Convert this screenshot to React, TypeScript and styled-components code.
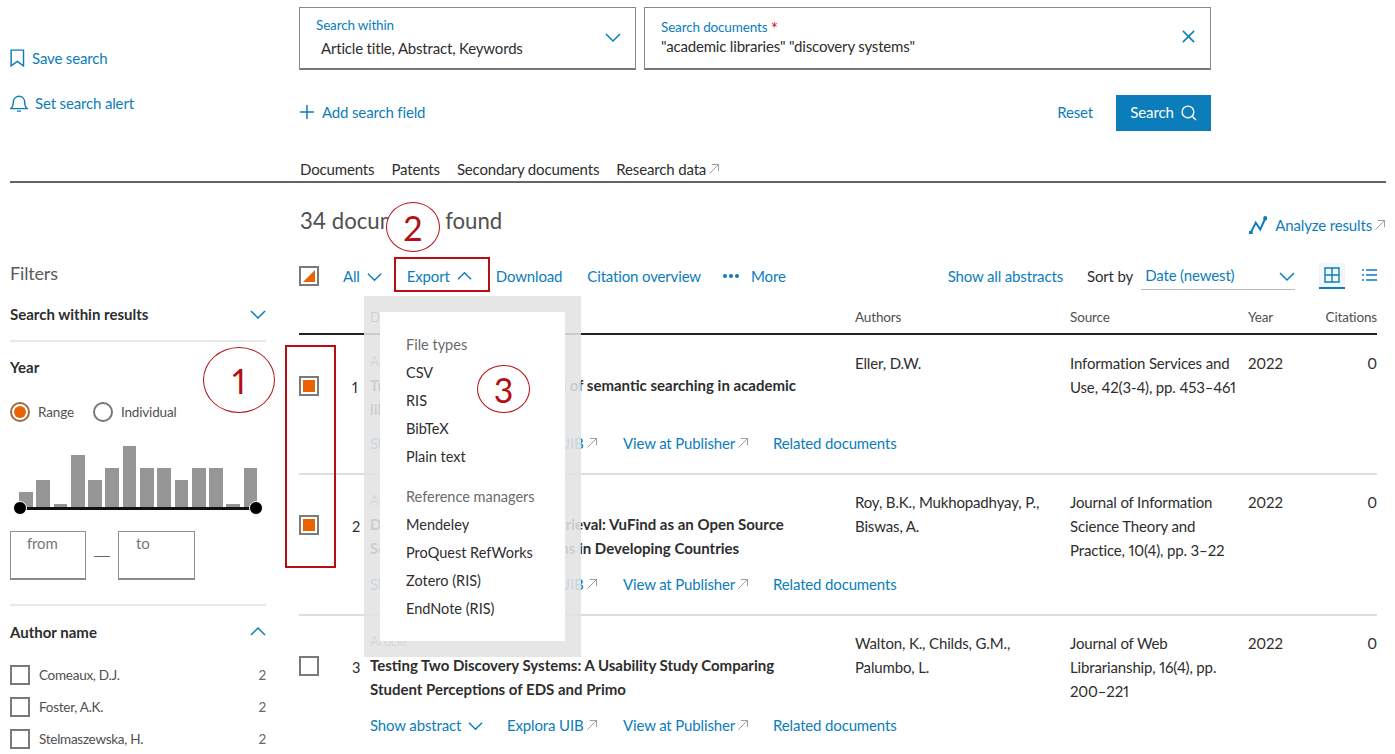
import React from "react";
import styled, { createGlobalStyle } from "styled-components";

const Global = createGlobalStyle`
  html, body { margin: 0; padding: 0; background: #fff; }
  body { font-family: Lato, "Open Sans", "Liberation Sans", sans-serif; font-size: 15px; color: #2e2e2e; letter-spacing: -0.15px; font-variant-numeric: proportional-nums; }
  * { box-sizing: border-box; }
`;

const BLUE = "#0c7dbb";
const RED = "#b50f14";
const ORANGE = "#e96400";

const Page = styled.div`
  position: relative;
  width: 1395px;
  height: 754px;
  overflow: hidden;
`;
const TopBar = styled.header`
  margin: 0 9px 0 10px;
  height: 183px;
  border-bottom: 2px solid #666;
  display: grid;
  grid-template-columns: 289px 912px;
`;
const SaveColumn = styled.div`
  display: flex;
  flex-direction: column;
  gap: 25px;
  padding-top: 48px;
`;
const BlueLink = styled.a<{ $gap?: number }>`
  display: inline-flex;
  align-items: center;
  gap: ${(p) => p.$gap ?? 7}px;
  color: ${BLUE};
  line-height: 20px;
  white-space: nowrap;
`;
const SearchColumn = styled.div`
  padding-top: 7px;
`;
const Fields = styled.div`
  display: flex;
  gap: 8px;
  height: 63px;
`;
const Field = styled.div<{ $w: number; $pt: number }>`
  position: relative;
  width: ${(p) => p.$w}px;
  border: 1px solid #8a8a8a;
  border-bottom: 2px solid #777;
  padding: ${(p) => p.$pt}px 16px 0;
`;
const FieldLabel = styled.div`
  color: ${BLUE};
  font-size: 13.5px;
  line-height: 18px;
  white-space: nowrap;
`;
const Req = styled.span`
  color: #c8102e;
  font-size: 17px;
  line-height: 10px;
  vertical-align: -3px;
`;
const FieldValue = styled.div<{ $indent?: number; $mt: number }>`
  line-height: 20px;
  letter-spacing: -0.18px;
  margin: ${(p) => p.$mt}px 0 0 ${(p) => p.$indent ?? 0}px;
  white-space: nowrap;
`;
const FieldIcon = styled.span`
  position: absolute;
  right: 14px;
  top: 21px;
  display: flex;
  color: ${BLUE};
`;
const Actions = styled.div`
  margin-top: 25px;
  height: 36px;
  display: flex;
  align-items: center;
`;
const AddLink = styled(BlueLink)`
  margin-top: -2px;
`;
const Reset = styled.a`
  margin: -2px 23px 0 auto;
  color: ${BLUE};
`;
const SearchButton = styled.button`
  width: 95px;
  height: 36px;
  border: 0;
  padding: 0 0 2px;
  background: ${BLUE};
  color: #fff;
  font: inherit;
  letter-spacing: inherit;
  display: flex;
  align-items: center;
  justify-content: center;
  gap: 6px;
`;
const Tabs = styled.nav`
  margin-top: 28px;
  padding-left: 1px;
  display: flex;
  gap: 17px;
  line-height: 20px;
`;
const Tab = styled.span`
  display: inline-flex;
  align-items: center;
  gap: 2px;
  white-space: nowrap;
`;
const Body = styled.div`
  margin-left: 10px;
  display: grid;
  grid-template-columns: 256px 1087px;
  column-gap: 33px;
`;
const Sidebar = styled.aside`
  padding-top: 78px;
`;
const FiltersTitle = styled.h2`
  margin: 0;
  font-size: 18px;
  font-weight: 400;
  line-height: 24px;
  color: #5a5a5a;
`;
const FilterHead = styled.div`
  display: flex;
  justify-content: space-between;
  align-items: center;
  font-weight: 700;
  font-size: 15px;
  letter-spacing: 0;
  line-height: 20px;
  color: #2e2e2e;
`;
const HeadIcon = styled.span`
  display: flex;
  color: ${BLUE};
`;
const Section = styled.section<{ $pt: number; $h: number; $line?: boolean }>`
  padding-top: ${(p) => p.$pt}px;
  height: ${(p) => p.$h}px;
  border-bottom: ${(p) => (p.$line ? "2px solid #e8e8e8" : "0")};
`;
const Radios = styled.div`
  margin-top: 25px;
  display: flex;
  align-items: center;
  gap: 8px;
  font-size: 13.5px;
  color: #505050;
  line-height: 20px;
`;
const Radio = styled.span<{ $on?: boolean; $ml?: number }>`
  width: 20px;
  height: 20px;
  margin-left: ${(p) => p.$ml ?? 0}px;
  border-radius: 50%;
  border: 2px solid ${(p) => (p.$on ? "#a06a45" : "#777")};
  display: flex;
  align-items: center;
  justify-content: center;
  &::after {
    content: "";
    width: 12px;
    height: 12px;
    border-radius: 50%;
    background: ${(p) => (p.$on ? ORANGE : "transparent")};
  }
`;
const Histogram = styled.div`
  position: relative;
  margin-top: 13px;
  height: 75px;
  padding-left: 9px;
  display: flex;
  align-items: flex-end;
  gap: 3.6px;
  width: 256px;
`;
const Bar = styled.div<{ $h: number }>`
  width: 13.7px;
  height: ${(p) => p.$h}px;
  background: #969696;
  margin-bottom: 3px;
`;
const Track = styled.div`
  position: absolute;
  left: 10px;
  right: 10px;
  bottom: 0;
  height: 3px;
  background: #111;
`;
const Handle = styled.span<{ $side: "left" | "right" }>`
  position: absolute;
  ${(p) => p.$side}: 3px;
  bottom: -5px;
  width: 14px;
  height: 14px;
  border-radius: 50%;
  background: #000;
  border: 1.5px solid #fff;
`;
const RangeInputs = styled.div`
  margin-top: 21px;
  display: flex;
  align-items: center;
`;
const RangeBox = styled.div<{ $w: number; $pl: number }>`
  width: ${(p) => p.$w}px;
  height: 49px;
  border: 1px solid #8f8f8f;
  border-bottom: 2px solid #8a8a8a;
  padding-left: ${(p) => p.$pl}px;
  color: #777;
  line-height: 22px;
`;
const Dash = styled.span`
  width: 16px;
  height: 1px;
  margin: 2px 8px 0 8px;
  background: #666;
`;
const AuthorList = styled.div`
  margin-top: 23px;
  display: flex;
  flex-direction: column;
  gap: 12px;
`;
const AuthorRow = styled.div`
  display: flex;
  align-items: center;
  height: 20px;
  font-size: 13.5px;
  letter-spacing: -0.27px;
  color: #505050;
  gap: 9px;
`;
const Count = styled.span`
  margin-left: auto;
  color: #666;
`;
const Check = styled.span`
  flex: none;
  display: flex;
  align-items: center;
  justify-content: center;
  width: 20px;
  height: 20px;
  border: 2px solid #7a7a7a;
  background: #fff;
`;
const Fill = styled.span`
  width: 12px;
  height: 12px;
  background: ${ORANGE};
`;
const Main = styled.main`
  padding-top: 24px;
`;
const ResultHead = styled.div`
  display: flex;
  justify-content: space-between;
  align-items: flex-start;
  height: 59px;
`;
const ResultTitle = styled.h1`
  margin: 0;
  padding-left: 1px;
  font-size: 22.2px;
  font-weight: 400;
  line-height: 28px;
  letter-spacing: 0;
  color: #505050;
  white-space: nowrap;
`;
const Analyze = styled(BlueLink)`
  margin-top: 8px;
  gap: 8px;
`;
const AnalyzeText = styled.span`
  display: inline-flex;
  align-items: center;
  gap: 2px;
`;
const Toolbar = styled.div`
  display: flex;
  align-items: center;
  height: 20px;
`;
const ToolLink = styled(BlueLink)<{ $ml: number }>`
  margin-left: ${(p) => p.$ml}px;
`;
const SortLabel = styled.span`
  margin-left: 24px;
  white-space: nowrap;
`;
const SortSelect = styled.div`
  flex: none;
  margin: 3px 0 0 8px;
  width: 154px;
  height: 25px;
  border-bottom: 1px solid #bbb;
  padding: 0 0 0 4px;
  color: ${BLUE};
  display: flex;
  justify-content: space-between;
  align-items: flex-start;
  line-height: 20px;
`;
const SortIcon = styled.span`
  display: flex;
  margin-top: 3px;
`;
const ViewBtn = styled.span<{ $active?: boolean; $ml: number }>`
  flex: none;
  margin-left: ${(p) => p.$ml}px;
  width: 26px;
  height: 26px;
  display: flex;
  align-items: center;
  justify-content: center;
  background: ${(p) => (p.$active ? "#f3f6f8" : "transparent")};
  border-bottom: 2px solid ${(p) => (p.$active ? BLUE : "transparent")};
`;
const gridCols = "53px 18px 485px 215px 178px 62px 67px";
const TableHead = styled.div`
  margin-top: 21px;
  width: 1078px;
  height: 28px;
  border-bottom: 2px solid #222;
  display: grid;
  grid-template-columns: ${gridCols};
  font-size: 13.5px;
  line-height: 20px;
  color: #505050;
`;
const RightCell = styled.div`
  text-align: right;
  white-space: nowrap;
`;
const Row = styled.article<{ $first: boolean }>`
  width: 1078px;
  height: ${(p) => (p.$first ? 140 : 141)}px;
  border-bottom: 2px solid #dedede;
  display: grid;
  grid-template-columns: ${gridCols};
  padding-top: ${(p) => (p.$first ? 16 : 15)}px;
  line-height: 24px;
`;
const CheckCell = styled.div`
  padding-top: 25px;
`;
const NumCell = styled.div`
  padding-top: 25px;
  font-size: 14.5px;
`;
const DocCell = styled.div`
  min-width: 0;
`;
const DocType = styled.div`
  font-size: 13px;
  line-height: 20px;
  color: #777;
`;
const DocTitle = styled.div`
  margin-top: 2px;
  font-weight: 700;
  font-size: 15px;
  line-height: 24px;
  letter-spacing: 0;
  color: #2e2e2e;
  height: 48px;
  white-space: nowrap;
`;
const DocLinks = styled.div<{ $first: boolean }>`
  margin-top: ${(p) => (p.$first ? 12 : 14)}px;
  display: flex;
  line-height: 20px;
`;
const DocLink = styled(BlueLink)<{ $w: number }>`
  flex: none;
  width: ${(p) => p.$w}px;
`;
const Overlay = styled.div`
  position: absolute;
  left: 364px;
  top: 296px;
  width: 217px;
  height: 361px;
  background: rgba(226, 226, 226, 0.88);
`;
const Menu = styled.div`
  position: absolute;
  left: 380px;
  top: 312px;
  width: 185px;
  height: 329px;
  background: #fff;
  padding: 19px 0 0 26px;
  line-height: 28px;
  font-size: 14.5px;
  letter-spacing: 0;
`;
const MenuHead = styled.div<{ $mt?: number }>`
  color: #6b6b6b;
  margin-top: ${(p) => p.$mt ?? 0}px;
`;
const MenuItem = styled.div`
  color: #2e2e2e;
  white-space: nowrap;
`;
const Ring = styled.div<{ $x: number; $y: number; $w: number; $h: number }>`
  position: absolute;
  left: ${(p) => p.$x}px;
  top: ${(p) => p.$y}px;
  width: ${(p) => p.$w}px;
  height: ${(p) => p.$h}px;
  border-radius: 50%;
  border: 1.7px solid ${RED};
  background: #fff;
  color: ${RED};
  font-size: 34px;
  letter-spacing: 0;
  display: flex;
  align-items: center;
  justify-content: center;
`;
const RedBox = styled.div<{ $x: number; $y: number; $w: number; $h: number }>`
  position: absolute;
  left: ${(p) => p.$x}px;
  top: ${(p) => p.$y}px;
  width: ${(p) => p.$w}px;
  height: ${(p) => p.$h}px;
  border: 2px solid ${RED};
`;

const Svg = ({ s = 16, c = "currentColor", w = 1.5, children }: { s?: number; c?: string; w?: number; children: React.ReactNode }) => (
  <svg width={s} height={s} viewBox="0 0 16 16" fill="none" stroke={c} strokeWidth={w} style={{ flex: "none" }}>
    {children}
  </svg>
);
const Down = ({ s = 16 }: { s?: number }) => (
  <Svg s={s}><path d="M1 5l7 7 7-7" /></Svg>
);
const Up = ({ s = 16 }: { s?: number }) => (
  <Svg s={s}><path d="M1 11l7-7 7 7" /></Svg>
);
const Ext = () => (
  <Svg s={12} c="#8a8a8a" w={1.1}><path d="M2 14L14 2M5 2h9v9" /></Svg>
);

const bars = [15, 27, 3, 52, 27, 39, 61, 39, 39, 27, 39, 39, 3, 39];
const authors = ["Comeaux, D.J.", "Foster, A.K.", "Stelmaszewska, H."];
const rows = [
  {
    n: 1, on: true,
    title: <>Trends and the usage impacts of semantic searching in academic<br />libraries</>,
    authors: "Eller, D.W.",
    source: <>Information Services and<br />Use, 42(3-4), pp. 453–461</>,
  },
  {
    n: 2, on: true,
    title: <>Discovery System in Data Retrieval: VuFind as an Open Source<br />Solution for Academic Systems in Developing Countries</>,
    authors: <>Roy, B.K., Mukhopadhyay, P.,<br />Biswas, A.</>,
    source: <>Journal of Information<br />Science Theory and<br />Practice, 10(4), pp. 3–22</>,
  },
  {
    n: 3, on: false,
    title: <>Testing Two Discovery Systems: A Usability Study Comparing<br />Student Perceptions of EDS and Primo</>,
    authors: <>Walton, K., Childs, G.M.,<br />Palumbo, L.</>,
    source: <>Journal of Web<br />Librarianship, 16(4), pp.<br />200–221</>,
  },
];

export default function App() {
  return (
    <Page>
      <Global />
      <TopBar>
        <SaveColumn>
          <BlueLink $gap={4}>
            <Svg s={18} w={1.3}><path d="M1 1h11v14L6.500 11 1 15z" /></Svg>
            Save search
          </BlueLink>
          <BlueLink>
            <Svg s={18} w={1.2}><path d="M.7 13c1.800-1.500 2.300-3 2.300-6a5 5 0 0 1 10 0c0 3 .5 4.500 2.300 6zM6.200 15.200h3.600" /></Svg>
            Set search alert
          </BlueLink>
        </SaveColumn>
        <SearchColumn>
          <Fields>
            <Field $w={337} $pt={8}>
              <FieldLabel>Search within</FieldLabel>
              <FieldValue $indent={5} $mt={4}>Article title, Abstract, Keywords</FieldValue>
              <FieldIcon><Down /></FieldIcon>
            </Field>
            <Field $w={567} $pt={10}>
              <FieldLabel>Search documents <Req>*</Req></FieldLabel>
              <FieldValue $mt={0}>"academic libraries" "discovery systems"</FieldValue>
              <FieldIcon><Svg s={15} w={1.6}><path d="M2 2l12 12M14 2L2 14" /></Svg></FieldIcon>
            </Field>
          </Fields>
          <Actions>
            <AddLink>
              <Svg s={16} w={1.5}><path d="M8 1v14M1 8h14" /></Svg>
              Add search field
            </AddLink>
            <Reset>Reset</Reset>
            <SearchButton>
              Search
              <Svg s={17} c="#fff" w={1.3}><circle cx="7.500" cy="7.500" r="5.500" /><path d="M11.500 11.500L15 15" /></Svg>
            </SearchButton>
          </Actions>
          <Tabs>
            <Tab>Documents</Tab>
            <Tab>Patents</Tab>
            <Tab>Secondary documents</Tab>
            <Tab>Research data<Ext /></Tab>
          </Tabs>
        </SearchColumn>
      </TopBar>
      <Body>
        <Sidebar>
          <FiltersTitle>Filters</FiltersTitle>
          <Section $pt={19} $h={57} $line>
            <FilterHead>Search within results<HeadIcon><Down /></HeadIcon></FilterHead>
          </Section>
          <Section $pt={15} $h={264} $line>
            <FilterHead>Year</FilterHead>
            <Radios>
              <Radio $on />Range<Radio $ml={11} />Individual
            </Radios>
            <Histogram>
              {bars.map((h, i) => <Bar key={i} $h={h} />)}
              <Track />
              <Handle $side="left" />
              <Handle $side="right" />
            </Histogram>
            <RangeInputs>
              <RangeBox $w={76} $pl={16}>from</RangeBox>
              <Dash />
              <RangeBox $w={77} $pl={17}>to</RangeBox>
            </RangeInputs>
          </Section>
          <Section $pt={16} $h={150}>
            <FilterHead>Author name<HeadIcon><Up /></HeadIcon></FilterHead>
            <AuthorList>
              {authors.map((a) => (
                <AuthorRow key={a}><Check />{a}<Count>2</Count></AuthorRow>
              ))}
            </AuthorList>
          </Section>
        </Sidebar>
        <Main>
          <ResultHead>
            <ResultTitle>34 documents found</ResultTitle>
            <Analyze>
              <Svg s={18} w={1.8}><path d="M1.500 15L6 6l4 6 4.500-10" /><circle cx="1.500" cy="15" r="1" /><circle cx="14.500" cy="2" r="1" /></Svg>
              <AnalyzeText>Analyze results<Ext /></AnalyzeText>
            </Analyze>
          </ResultHead>
          <Toolbar>
            <Check>
              <svg width="16" height="16" viewBox="0 0 16 16"><path d="M2 14L14 2v12z" fill={ORANGE} /></svg>
            </Check>
            <ToolLink $ml={24}>All <Down s={15} /></ToolLink>
            <ToolLink $ml={25}>Export <Up s={15} /></ToolLink>
            <ToolLink $ml={24}>Download</ToolLink>
            <ToolLink $ml={25}>Citation overview</ToolLink>
            <ToolLink $ml={21} $gap={11}>
              <svg width="18" height="6" viewBox="0 0 18 6"><g fill={BLUE}><circle cx="3" cy="3" r="2" /><circle cx="9" cy="3" r="2" /><circle cx="15" cy="3" r="2" /></g></svg>
              More
            </ToolLink>
            <ToolLink $ml={162}>Show all abstracts</ToolLink>
            <SortLabel>Sort by</SortLabel>
            <SortSelect>Date (newest)<SortIcon><Down /></SortIcon></SortSelect>
            <ViewBtn $active $ml={24}>
              <Svg s={16} c={BLUE} w={1.4}><path d="M1 1h14v14H1zM8 1v14M1 8h14" /></Svg>
            </ViewBtn>
            <ViewBtn $ml={11}>
              <Svg s={16} c={BLUE} w={1.5}><path d="M5 3h11M5 8h11M5 13h11M1 3h2M1 8h2M1 13h2" /></Svg>
            </ViewBtn>
          </Toolbar>
          <TableHead>
            <span /><span />
            <span>Document title</span>
            <span>Authors</span>
            <span>Source</span>
            <span>Year</span>
            <RightCell>Citations</RightCell>
          </TableHead>
          {rows.map((r) => (
            <Row key={r.n} $first={r.n === 1}>
              <CheckCell><Check>{r.on && <Fill />}</Check></CheckCell>
              <NumCell>{r.n}</NumCell>
              <DocCell>
                <DocType>Article</DocType>
                <DocTitle>{r.title}</DocTitle>
                <DocLinks $first={r.n === 1}>
                  <DocLink $w={137}>Show abstract <Down s={15} /></DocLink>
                  <DocLink $w={116} $gap={2}>Explora UIB<Ext /></DocLink>
                  <DocLink $w={150} $gap={2}>View at Publisher<Ext /></DocLink>
                  <DocLink $w={130}>Related documents</DocLink>
                </DocLinks>
              </DocCell>
              <div>{r.authors}</div>
              <div>{r.source}</div>
              <div>2022</div>
              <RightCell>0</RightCell>
            </Row>
          ))}
        </Main>
      </Body>
      <Overlay />
      <Menu>
        <MenuHead>File types</MenuHead>
        {["CSV", "RIS", "BibTeX", "Plain text"].map((m) => <MenuItem key={m}>{m}</MenuItem>)}
        <MenuHead $mt={12}>Reference managers</MenuHead>
        {["Mendeley", "ProQuest RefWorks", "Zotero (RIS)", "EndNote (RIS)"].map((m) => <MenuItem key={m}>{m}</MenuItem>)}
      </Menu>
      <RedBox $x={394} $y={257} $w={96} $h={35} />
      <RedBox $x={285} $y={345} $w={51} $h={223} />
      <Ring $x={203} $y={347} $w={72} $h={66}>1</Ring>
      <Ring $x={386} $y={202} $w={54} $h={50}>2</Ring>
      <Ring $x={477} $y={365} $w={53} $h={48}>3</Ring>
    </Page>
  );
}
